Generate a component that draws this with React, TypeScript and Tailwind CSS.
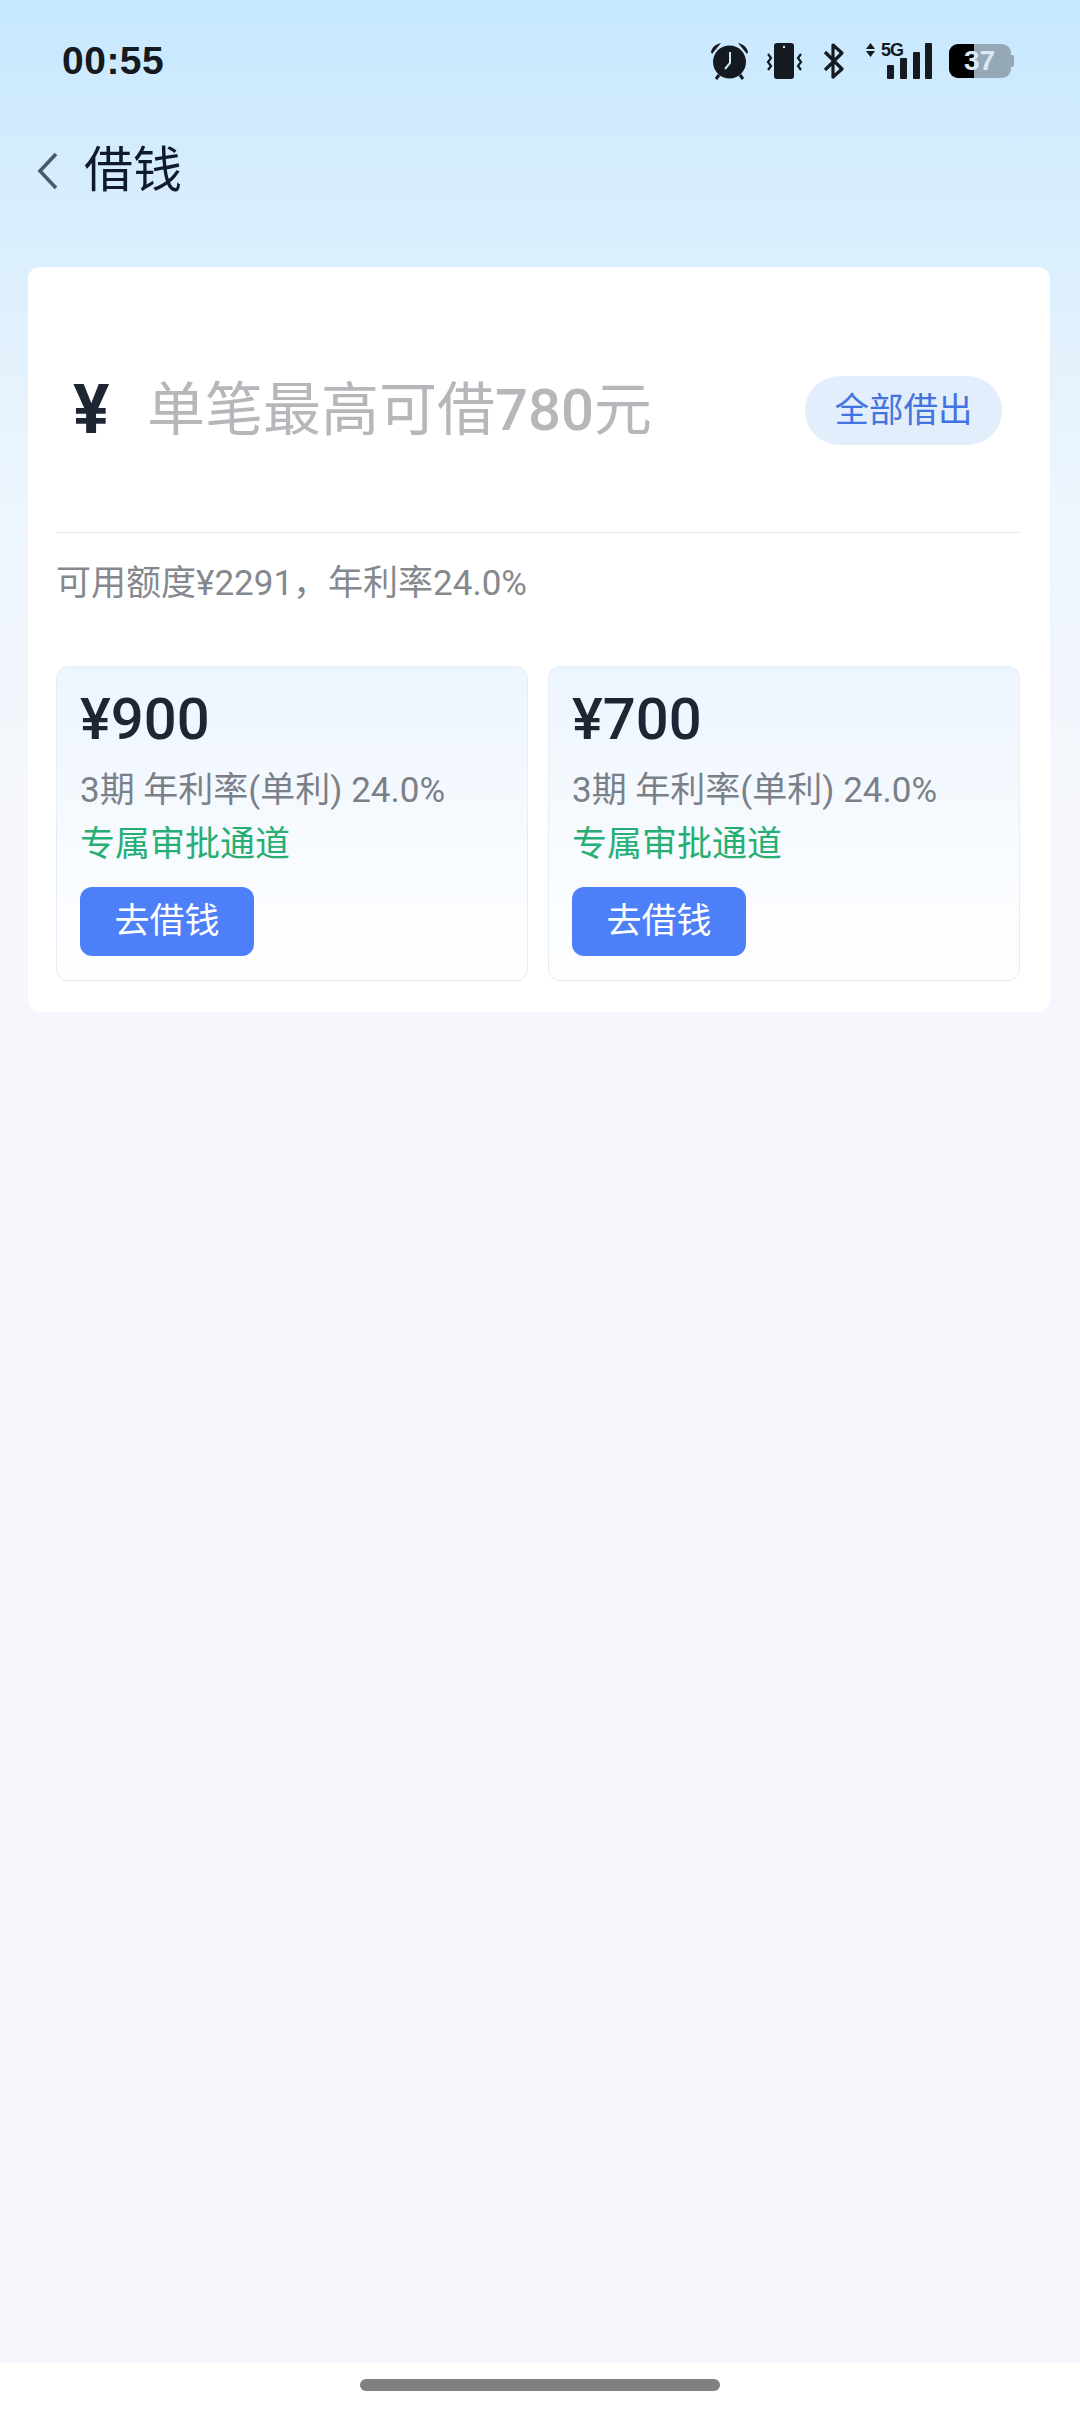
const font = { fontFamily: 'Roboto, "Noto Sans CJK SC", sans-serif' };

function StatusIcons() {
  return (
    <div className="flex items-center">
      {/* alarm */}
      <svg width="40" height="40" viewBox="0 0 40 40" className="mr-[15px]">
        <circle cx="19.500" cy="21" r="16.500" fill="#141a20" />
        <path d="M20 11v11l-5 6" fill="none" stroke="#c9e8fe" strokeWidth="2" />
        <path d="M1 11 C2 6 6 3 11 2 L2 13Z M38 11 C37 6 33 3 28 2 L37 13Z" fill="#141a20" />
        <path d="M9 34l-3 4M30 34l3 4" stroke="#141a20" strokeWidth="3" />
      </svg>
      {/* vibrate */}
      <svg width="38" height="38" viewBox="0 0 38 38" className="mr-[19px]">
        <rect x="9" y="1" width="20" height="36" rx="3" fill="#141a20" />
        <circle cx="19" cy="5" r="1.200" fill="#c9e8fe" />
        <path d="M3 12l3 4-3 4 3 4-3 4M36 12l-3 4 3 4-3 4 3 4" fill="none" stroke="#141a20" strokeWidth="2.200" />
      </svg>
      {/* bluetooth */}
      <svg width="24" height="38" viewBox="0 0 24 38" className="mr-[19px]">
        <path d="M3 10l17 17-9 8V3l9 8L3 28" fill="none" stroke="#141a20" strokeWidth="3.200" strokeLinejoin="round" />
      </svg>
      {/* signal */}
      <div className="relative w-[70px] h-[38px] mr-[14px]">
        <svg width="70" height="38" viewBox="0 0 70 38" className="absolute left-0 top-0">
          <path d="M1 7l4.500-6 4.500 6zM1 9h9l-4.500 6z" fill="#141a20" />
          <rect x="22" y="23" width="7" height="14" rx="1" fill="#141a20" />
          <rect x="35" y="16" width="7" height="21" rx="1" fill="#141a20" />
          <rect x="48" y="10" width="7" height="27" rx="1" fill="#141a20" />
          <rect x="60" y="1" width="7" height="36" rx="1" fill="#141a20" />
        </svg>
        <span
          className="absolute left-[16px] top-[-2px] text-[18px] leading-[20px] font-bold text-[#141a20] tracking-[-1px]"
          style={{ fontFamily: '"Liberation Sans", sans-serif' }}
        >
          5G
        </span>
      </div>
      {/* battery */}
      <div className="relative w-[66px] h-[34px] flex items-center">
        <div className="w-[62px] h-[34px] rounded-[9px] bg-[#95a8b6] overflow-hidden">
          <div className="w-[25px] h-full bg-black" />
        </div>
        <div className="w-[3px] h-[12px] rounded-r-[2px] bg-[#95a8b6]" />
        <span
          className="absolute left-[15px] top-0 text-[28px] leading-[34px] font-bold text-[#dce8f2]"
          style={{ fontFamily: '"Liberation Sans", sans-serif' }}
        >
          37
        </span>
      </div>
    </div>
  );
}

function LoanCard({ amount }: { amount: string }) {
  return (
    <div className="flex-1 h-[315px] rounded-[12px] border border-[#e3eef9] bg-gradient-to-b from-[#edf5fe] to-white pl-[23px] pt-[19px]">
      <div className="text-[58px] leading-[66px] font-medium text-[#1e2633]">{amount}</div>
      <div className="mt-[17px] text-[35px] leading-[44px] text-[#7b8088]">3期 年利率(单利) 24.0%</div>
      <div className="mt-[10px] text-[35px] leading-[44px] text-[#27ae74]">专属审批通道</div>
      <button className="mt-[20px] block w-[174px] h-[69px] rounded-[12px] bg-[#4d80f8] text-[35px] leading-[69px] text-white text-center">
        去借钱
      </button>
    </div>
  );
}

export default function App() {
  return (
    <div className="w-[1080px] h-[2412px] flex flex-col overflow-hidden bg-[linear-gradient(180deg,#c7e8ff_0px,#d9eefd_220px,#ecf5fd_480px,#f5f7fc_800px,#f5f7fc_100%)]" style={font}>
      <div className="h-[122px] shrink-0 flex items-center justify-between pl-[62px] pr-[65px]">
        <span
          className="text-[39px] font-bold text-[#141a20] tracking-[0.5px]"
          style={{ fontFamily: '"Liberation Sans", sans-serif' }}
        >
          00:55
        </span>
        <StatusIcons />
      </div>

      <div className="h-[98px] shrink-0 flex items-center pl-[36px]">
        <svg width="24" height="40" viewBox="0 0 24 40" className="mr-[24px]">
          <path d="M20 3L4 20l16 17" fill="none" stroke="#4b5966" strokeWidth="3.600" />
        </svg>
        <span className="text-[49px] leading-[60px] text-[#0f1b2a]">借钱</span>
      </div>

      <div className="ml-[28px] mr-[30px] mt-[47px] h-[745px] shrink-0 rounded-[12px] bg-white pl-[28px] pr-[30px]">
        <div className="h-[266px] flex items-start border-b border-[#e8eaee]">
          <span className="mt-[105px] w-[91px] pl-[17px] text-[68px] leading-[76px] font-bold text-[#1e2633]">¥</span>
          <span className="mt-[105px] text-[58px] leading-[76px] text-[#b5b7bb]">
            单笔最高可借<span className="font-medium">780</span>元
          </span>
          <button className="ml-auto mt-[109px] mr-[18px] w-[197px] h-[69px] rounded-full bg-[#e3eefc] text-[34.5px] leading-[69px] text-[#4274e0] text-center">
            全部借出
          </button>
        </div>
        <div className="mt-[29px] text-[35px] leading-[44px] text-[#85888e]">可用额度¥2291，年利率24.0%</div>
        <div className="mt-[60px] flex gap-[20px]">
          <LoanCard amount="¥900" />
          <LoanCard amount="¥700" />
        </div>
      </div>

      <div className="mt-auto h-[49px] shrink-0 bg-white flex justify-center pt-[16px]">
        <div className="w-[360px] h-[12px] rounded-full bg-[#808080]" />
      </div>
    </div>
  );
}
